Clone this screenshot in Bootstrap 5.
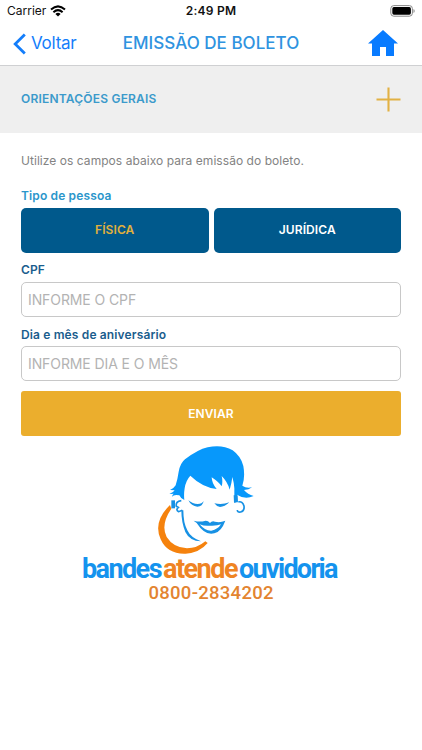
<!DOCTYPE html>
<html lang="pt-BR">
<head>
<meta charset="utf-8">
<meta name="viewport" content="width=device-width, initial-scale=1">
<title>Emissão de boleto</title>
<link href="https://cdn.jsdelivr.net/npm/bootstrap@5.3.0/dist/css/bootstrap.min.css" rel="stylesheet">
<style>
body{font-family:Inter,"Liberation Sans",sans-serif;background:#fff;overflow:hidden}
svg{display:block;flex:none}
.status-bar{height:22px;font-size:12px;color:#111;padding:0 7px}
.status-bar>div{flex:1 1 0}
.status-bar .clock{font-weight:600;letter-spacing:.25px}
.top-nav{height:44px;border-bottom:1px solid #cfd0d2;padding:0 24px 0 13px}
.top-nav>*{flex:1 1 0}
.top-nav .back{color:#147efb;font-size:17px;letter-spacing:-.25px;gap:5px}
.top-nav h1{flex:none;font-size:17px;font-weight:500;color:#2f93e0;letter-spacing:.03px;margin-left:11px!important}
.guide{height:67px;background:#efefef;padding:0 21px;font-size:12px;font-weight:600;color:#3b9acb;letter-spacing:.2px}
.guide span{padding-bottom:2px}
.form-area{padding:0 21px}
.intro{font-size:12px;line-height:16px;color:#838383;margin-top:19.5px;letter-spacing:.05px}
.field-label{font-size:12px;line-height:16px;font-weight:600;color:#1a5d8d;display:block;letter-spacing:.14px}
.btn.choice,.btn.send{height:45px;border:0;font-size:12px;font-weight:600;color:#fff;border-radius:5px;letter-spacing:.1px}
.btn.choice{background:#00598c}
.btn.choice.on{color:#e0b03c}
.btn.send{background:#ebae2d;border-radius:3px}
.form-control.entry{height:35px;padding:0 6px;border:1px solid #c8c8c8;border-radius:5px;font-size:14px;line-height:33px;letter-spacing:-.1px}
.entry::placeholder{color:#b3b3b3;opacity:1}
.wordmark{font-family:Roboto,sans-serif;font-weight:700;font-size:27px}
.phone{font-family:Roboto,sans-serif;font-weight:500;font-size:18.5px}
</style>
<script src="https://cdn.jsdelivr.net/npm/bootstrap@5.3.0/dist/js/bootstrap.bundle.min.js"></script>
</head>
<body>
<div class="status-bar d-flex align-items-center">
  <div class="d-flex align-items-center gap-1"><span>Carrier</span>
    <svg width="16" height="12" viewBox="0 0 16 12"><g fill="none" stroke="#000" stroke-width="2"><path d="M1 4.6Q8-1.8 15 4.6M3.4 7.2Q8 3 12.6 7.2"/></g><path d="M5.4 8.9Q8 6.8 10.6 8.9L8 11.5Z"/></svg>
  </div>
  <span class="clock">2:49 PM</span>
  <div class="d-flex justify-content-end">
    <svg width="25" height="12" viewBox="0 0 25 12"><rect x=".8" y=".6" width="21.6" height="10.6" rx="3" fill="#fff" stroke="#888"/><rect x="2.3" y="2.1" width="18.6" height="7.6" rx="1.6"/><path d="M23.5 4v4q1.2-.7 1.2-2t-1.2-2" fill="#888"/></svg>
  </div>
</div>
<nav class="top-nav d-flex align-items-center">
  <a href="#" class="back d-flex align-items-center text-decoration-none"><svg width="13" height="22" viewBox="0 0 13 22"><path d="M11.8 1.5 2.2 11l9.6 9.5" fill="none" stroke="#147efb" stroke-width="2.8"/></svg><span>Voltar</span></a>
  <h1 class="m-0">EMISSÃO DE BOLETO</h1>
  <a href="#" class="d-flex justify-content-end" aria-label="Início"><svg width="30" height="28" viewBox="0 1 30 28"><path d="M15 1 30 14.5H26V27H18V18H12V27H4V14.5H0Z" fill="#087bff"/></svg></a>
</nav>
<section class="guide d-flex align-items-center justify-content-between">
  <span>ORIENTAÇÕES GERAIS</span>
  <svg width="25" height="25" viewBox="0 0 25 25"><path d="M12.5.5v24M.5 12.5h24" stroke="#e2b144" stroke-width="2.1"/></svg>
</section>
<main class="form-area">
  <p class="intro mb-0">Utilize os campos abaixo para emissão do boleto.</p>
  <div class="field-label" style="color:#2b96cb;margin-top:19px">Tipo de pessoa</div>
  <div class="d-flex" style="gap:5px;margin-top:4px">
    <button class="btn choice on w-50">FÍSICA</button>
    <button class="btn choice w-50">JURÍDICA</button>
  </div>
  <label class="field-label" for="cpf" style="margin-top:9px">CPF</label>
  <input class="form-control entry" id="cpf" placeholder="INFORME O CPF" style="margin-top:4px">
  <label class="field-label" for="birth" style="margin-top:10px">Dia e mês de aniversário</label>
  <input class="form-control entry" id="birth" placeholder="INFORME DIA E O MÊS" style="margin-top:3.5px">
  <button class="btn send w-100 d-block" style="margin-top:10px">ENVIAR</button>
</main>
<svg class="mx-auto" style="margin-top:9px" width="262" height="160" viewBox="80 445 262 160" role="img" aria-label="bandes atende ouvidoria">
  <g transform="translate(150 440) scale(.33333)">
    <path fill="#0798fb" d="M58 162Q70 158 74 151L60 150Q72 145 77 136Q83 116 86 95Q91 69 105 58Q143 29 173 22Q215 12 248 31Q273 49 280 78Q286 111 277 137Q289 146 306 142Q297 150 282 150Q293 163 311 168Q285 180 261 164L264 187H253V145Q252 128 247 111Q245 130 239 149Q233 126 215 108Q219 125 215 139Q206 126 185 112Q186 132 200 147Q157 142 121 107Q107 122 104 145Q101 162 103 180Q90 173 88 166Q72 162 66 170Q67 164 71 161Z"/>
    <g transform="translate(0 165)">
      <path fill="#f5820d" d="M60 30Q8 80 32 133Q52 178 107 176Q149 173 173 144L166 139Q141 160 111 160Q70 158 50 126Q31 89 64 41Z"/>
      <path fill="#1791e4" d="M64 16H75V40H64Z"/>
      <path fill="none" stroke="#1791e4" stroke-width="5" d="M94 17Q76 19 79 34L85 37Q76 45 86 50L97 46M265 21Q277 17 282 33Q284 48 272 51Q262 53 262 45"/>
      <path fill="#1791e4" d="M94 46H100Q100 84 112 106Q122 128 153 139Q119 138 106 111Q94 82 94 46ZM115 16Q128 27 143 27Q156 27 161 18Q158 35 142 35Q124 34 115 16ZM193 25Q217 30 238 22Q224 36 210 36Q199 34 193 25ZM251 1H263V18Q258 25 252 23Z"/>
      <path fill="#1791e4" fill-rule="evenodd" d="M131 77Q150 82 164 78Q173 76 180 84Q186 76 195 80Q210 84 226 77Q214 110 193 115Q165 123 140 84ZM149 88Q165 108 184 107Q204 103 213 88Q201 93 180 92Q164 94 149 88Z"/>
    </g>
  </g>
  <g class="wordmark" fill="#1493ee">
    <text x="82" y="578.3" textLength="80.5">bandes</text>
    <text x="163" y="578.3" textLength="75.5" fill="#ef8423">atende</text>
    <text x="239" y="578.3" textLength="99.5">ouvidoria</text>
  </g>
  <text class="phone" x="148.5" y="598.8" textLength="125" fill="#e38430">0800-2834202</text>
</svg>
</body>
</html>
